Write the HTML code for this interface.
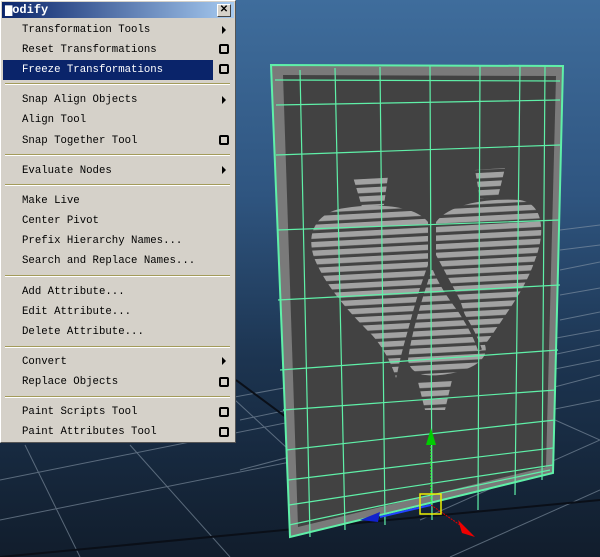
<!DOCTYPE html>
<html><head><style>
*{margin:0;padding:0}
body{width:600px;height:557px;overflow:hidden;position:relative;background:linear-gradient(#3f6d9c 0%,#2f5580 35%,#1c3450 65%,#111d2c 100%);font-family:"Liberation Mono",monospace}
svg.s{position:absolute;left:0;top:0}
#m{position:absolute;left:0;top:0;width:234px;height:441px;background:#d5d1c9;border:1px solid #fff;border-right-color:#555;border-bottom-color:#555}
#t{position:absolute;left:1px;top:1px;width:232px;height:16px;background:linear-gradient(90deg,#0a246a,#a6caf0);color:#fff;font-weight:bold;font-size:12px;line-height:16px;padding-left:3px;box-sizing:border-box}
#x{position:absolute;right:3px;top:2px;width:12px;height:11px;background:#d5d1c9;border:1px solid #fff;border-right-color:#444;border-bottom-color:#444;font-size:10px;line-height:10px;text-align:center;color:#000;font-family:"Liberation Sans",sans-serif}
.i{position:absolute;left:21px;font-size:10.7px;color:#000;height:20px;line-height:20px;white-space:pre}
.h{background:#0a246a;color:#fff;left:2px;padding-left:19px;width:191px}
.sep{position:absolute;left:4px;width:225px;height:0;border-top:1px solid #a39b5a;border-bottom:1px solid #fff}
.ar{position:absolute;left:221px;width:0;height:0;border-left:4px solid #000;border-top:4px solid transparent;border-bottom:4px solid transparent}
.bx{position:absolute;left:218px;width:6px;height:6px;border:2px solid #000;border-radius:2px}
</style></head><body>
<svg class="s" width="600" height="557" viewBox="0 0 600 557">
<defs>
<pattern id="st" width="10" height="8.6" patternUnits="userSpaceOnUse" patternTransform="rotate(-3)">
<rect width="10" height="5.5" fill="#a2a2a2"/></pattern>
</defs>
<g stroke="#8898a8" stroke-width="1" opacity="0.6" fill="none">
<line x1="0" y1="480" x2="600" y2="360"/><line x1="0" y1="520" x2="600" y2="400"/><line x1="0" y1="440" x2="600" y2="330"/>
<line x1="240" y1="420" x2="600" y2="345"/><line x1="240" y1="470" x2="600" y2="375"/>
<line x1="560" y1="230" x2="600" y2="225"/><line x1="560" y1="250" x2="600" y2="245"/><line x1="560" y1="270" x2="600" y2="262"/><line x1="560" y1="295" x2="600" y2="288"/><line x1="560" y1="320" x2="600" y2="312"/>
<line x1="25" y1="445" x2="80" y2="557"/><line x1="130" y1="445" x2="230" y2="557"/><line x1="235" y1="400" x2="300" y2="460"/>
<line x1="420" y1="520" x2="600" y2="440"/><line x1="450" y1="557" x2="600" y2="490"/>
<line x1="555" y1="420" x2="600" y2="440"/>
</g>
<line x1="0" y1="557" x2="600" y2="500" stroke="#0a0f18" stroke-width="2"/>
<line x1="236" y1="380" x2="290" y2="420" stroke="#0a0f18" stroke-width="2"/>
<polygon points="271,65 563,66 553,473 290,537" fill="#7a7a7a" stroke="#5ff0a8" stroke-width="2"/>
<polygon points="283,75 556,76 546,467 298,527" fill="#424242"/>
<g fill="url(#st)">
<path d="M428,222 C415,205 375,203 345,208 C315,212 305,235 315,260 C328,290 352,315 372,335 C385,350 392,365 396,378 L400,368 C405,340 415,300 428,265 Z"/>
<path d="M436,222 C450,203 490,198 520,200 C545,204 545,235 535,260 C525,290 505,315 492,335 C485,345 480,350 478,355 L460,300 L436,255 Z"/>
<path d="M432,268 C445,300 470,325 485,345 C490,360 470,372 440,375 C420,377 410,372 408,360 C412,330 422,300 432,268 Z"/>
<path d="M353,177 L388,176 L384,205 L362,207 Z"/>
<path d="M475,170 L505,168 L498,197 L480,199 Z"/>
<path d="M418,382 L452,380 L445,410 L425,410 Z"/>
</g>
<g stroke="#424242" stroke-width="4" fill="none">
<path d="M432,262 C420,300 405,340 398,380"/>
<path d="M432,262 C450,300 470,320 480,350"/>
<path d="M432,225 L432,265"/>
</g>
<g stroke="#5ff0a8" stroke-width="1.2" fill="none">
<path d="M275,80 L560,81 M276,105 L560,100 M276,155 L560,145 M277,230 L560,220 M278,300 L560,285 M280,370 L558,350 M283,410 L556,390 M286,450 L555,420 M288,480 L553,448 M289,505 L553,465 M289,525 L550,470"/>
<path d="M300,70 L310,537 M335,68 L345,530 M380,67 L385,525 M430,66 L432,520 M480,66 L478,510 M520,66 L515,495 M545,66 L542,480"/>
</g>
<line x1="431" y1="440" x2="431" y2="505" stroke="#2f2" stroke-dasharray="2,1"/>
<polygon points="431,428 426,445 436,445" fill="#0c0"/>
<line x1="431" y1="505" x2="460" y2="525" stroke="#d00" stroke-dasharray="2,1"/>
<polygon points="475,537 458,520 462,533" fill="#e00"/>
<polygon points="360,520 380,512 378,522" fill="#12c"/>
<line x1="380" y1="517" x2="431" y2="505" stroke="#24f" stroke-width="2"/>
<rect x="420" y="494" width="21" height="20" fill="none" stroke="#ee0" stroke-width="1.5"/>
</svg>
<div id="m">
<div id="t">▆odify<div id="x">✕</div></div>
<div class="i" style="top:19px">Transformation Tools</div><div class="ar" style="top:25px"></div>
<div class="i" style="top:39px">Reset Transformations</div><div class="bx" style="top:43px"></div>
<div class="i h" style="top:59px">Freeze Transformations</div><div class="bx" style="top:63px"></div>
<div class="sep" style="top:82px"></div>
<div class="i" style="top:89px">Snap Align Objects</div><div class="ar" style="top:95px"></div>
<div class="i" style="top:109px">Align Tool</div>
<div class="i" style="top:130px">Snap Together Tool</div><div class="bx" style="top:134px"></div>
<div class="sep" style="top:153px"></div>
<div class="i" style="top:160px">Evaluate Nodes</div><div class="ar" style="top:165px"></div>
<div class="sep" style="top:183px"></div>
<div class="i" style="top:190px">Make Live</div>
<div class="i" style="top:210px">Center Pivot</div>
<div class="i" style="top:230px">Prefix Hierarchy Names...</div>
<div class="i" style="top:250px">Search and Replace Names...</div>
<div class="sep" style="top:274px"></div>
<div class="i" style="top:281px">Add Attribute...</div>
<div class="i" style="top:301px">Edit Attribute...</div>
<div class="i" style="top:321px">Delete Attribute...</div>
<div class="sep" style="top:345px"></div>
<div class="i" style="top:351px">Convert</div><div class="ar" style="top:356px"></div>
<div class="i" style="top:371px">Replace Objects</div><div class="bx" style="top:376px"></div>
<div class="sep" style="top:395px"></div>
<div class="i" style="top:401px">Paint Scripts Tool</div><div class="bx" style="top:406px"></div>
<div class="i" style="top:421px">Paint Attributes Tool</div><div class="bx" style="top:426px"></div>
</div>
</body></html>
